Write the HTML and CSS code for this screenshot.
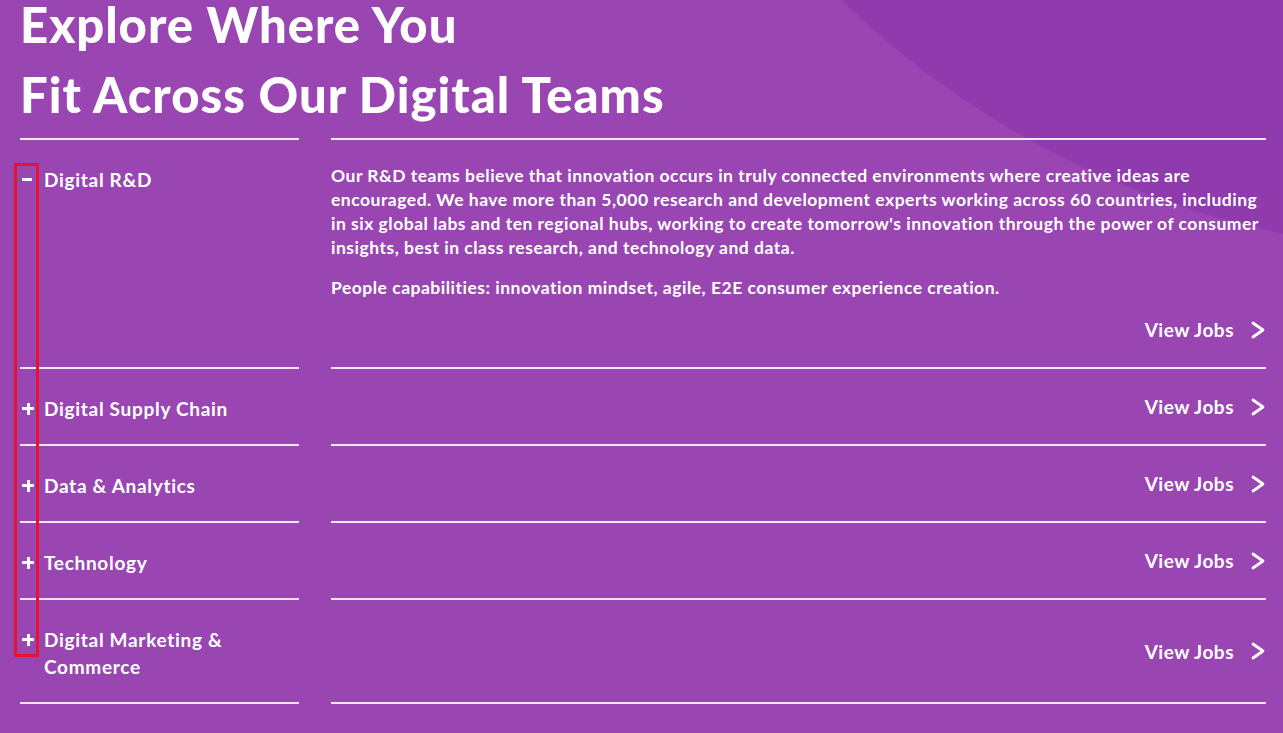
FILE: index.html
```html
<!DOCTYPE html>
<html lang="en">
<head>
<meta charset="utf-8">
<title>Explore Where You Fit Across Our Digital Teams</title>
<link rel="stylesheet" href="styles.css">
</head>
<body>
<section class="teams">
  <h1 class="teams-title">Explore Where You<br>Fit Across Our Digital Teams</h1>
  <div class="accordion">
    <div class="row row-first">
      <div class="cell cell-name">
        <span class="toggle toggle-minus"></span>
        <span class="name">Digital R&amp;D</span>
      </div>
      <div class="cell cell-body">
        <p class="desc">Our R&amp;D teams believe that innovation occurs in truly connected environments where creative ideas are encouraged. We have more than 5,000 research and development experts working across 60 countries, including in six global labs and ten regional hubs, working to create tomorrow's innovation through the power of consumer insights, best in class research, and technology and data.</p>
        <p class="desc">People capabilities: innovation mindset, agile, E2E consumer experience creation.</p>
        <a class="jobs" href="#">View Jobs <svg class="chev" viewBox="0 0 16 18" width="16" height="18"><path d="M3 2 L13 9 L3 16" fill="none" stroke="#fff" stroke-width="2.8" stroke-linecap="round" stroke-linejoin="round"/></svg></a>
      </div>
    </div>
    <div class="row">
      <div class="cell cell-name">
        <span class="toggle"></span>
        <span class="name">Digital Supply Chain</span>
      </div>
      <div class="cell cell-body cell-closed">
        <a class="jobs" href="#">View Jobs <svg class="chev" viewBox="0 0 16 18" width="16" height="18"><path d="M3 2 L13 9 L3 16" fill="none" stroke="#fff" stroke-width="2.8" stroke-linecap="round" stroke-linejoin="round"/></svg></a>
      </div>
    </div>
    <div class="row">
      <div class="cell cell-name">
        <span class="toggle"></span>
        <span class="name">Data &amp; Analytics</span>
      </div>
      <div class="cell cell-body cell-closed">
        <a class="jobs" href="#">View Jobs <svg class="chev" viewBox="0 0 16 18" width="16" height="18"><path d="M3 2 L13 9 L3 16" fill="none" stroke="#fff" stroke-width="2.8" stroke-linecap="round" stroke-linejoin="round"/></svg></a>
      </div>
    </div>
    <div class="row">
      <div class="cell cell-name">
        <span class="toggle"></span>
        <span class="name">Technology</span>
      </div>
      <div class="cell cell-body cell-closed">
        <a class="jobs" href="#">View Jobs <svg class="chev" viewBox="0 0 16 18" width="16" height="18"><path d="M3 2 L13 9 L3 16" fill="none" stroke="#fff" stroke-width="2.8" stroke-linecap="round" stroke-linejoin="round"/></svg></a>
      </div>
    </div>
    <div class="row">
      <div class="cell cell-name">
        <span class="toggle"></span>
        <span class="name">Digital Marketing &amp;<br>Commerce</span>
      </div>
      <div class="cell cell-body cell-closed">
        <a class="jobs" href="#">View Jobs <svg class="chev" viewBox="0 0 16 18" width="16" height="18"><path d="M3 2 L13 9 L3 16" fill="none" stroke="#fff" stroke-width="2.8" stroke-linecap="round" stroke-linejoin="round"/></svg></a>
      </div>
    </div>
  </div>
  <div class="highlight"></div>
</section>
</body>
</html>
```

FILE: styles.css
```css
html, body {
  margin: 0;
  padding: 0;
}
body {
  width: 1283px;
  height: 733px;
  overflow: hidden;
  background-color: #9a46b2;
  background-image: radial-gradient(circle 894px at 1463px -641px, #8f3aad 99.8%, #9a46b2 100%);
  background-repeat: no-repeat;
  font-family: "Lato", "Open Sans", sans-serif;
  color: #fff;
}
.teams {
  display: flow-root;
  position: relative;
  padding: 0 17px 0 20px;
}
.teams-title {
  margin: -11px 0 9px;
  font-size: 49px;
  line-height: 70px;
  font-weight: 900;
  letter-spacing: 1px;
}
.accordion {
  display: flex;
  flex-direction: column;
}
.row {
  display: grid;
  grid-template-columns: 279px 935px;
  column-gap: 32px;
}
.cell {
  border-bottom: 2px solid #f6e9f8;
  padding: 24px 0;
}
.row-first .cell {
  border-top: 2px solid #f6e9f8;
}
.cell-name {
  display: flex;
  align-items: flex-start;
  gap: 10px;
  padding: 26px 0 22px;
}
.name {
  font-size: 19px;
  font-weight: 700;
  line-height: 27px;
  letter-spacing: 0.7px;
}
.toggle {
  position: relative;
  width: 12px;
  height: 27px;
  flex: none;
  margin-left: 2px;
}
.toggle::before,
.toggle::after {
  content: "";
  position: absolute;
  background: #fff;
}
.toggle::before {
  left: 0;
  top: 12px;
  width: 12px;
  height: 3px;
}
.toggle::after {
  left: 4.5px;
  top: 7.5px;
  width: 3px;
  height: 12px;
}
.toggle-minus::after {
  display: none;
}
.toggle-minus::before {
  width: 10px;
}
.cell-body {
  display: flex;
  flex-direction: column;
}
.cell-closed {
  justify-content: center;
}
.desc {
  margin: 0 0 16px;
  font-size: 17.5px;
  font-weight: 700;
  line-height: 24px;
  letter-spacing: 0.5px;
}
.jobs {
  align-self: flex-end;
  display: flex;
  align-items: center;
  gap: 16px;
  color: #fff;
  text-decoration: none;
  font-size: 19px;
  font-weight: 700;
  line-height: 27px;
  letter-spacing: 0.5px;
}
.chev {
  display: block;
}
.highlight {
  position: absolute;
  left: 14px;
  top: 163px;
  width: 19px;
  height: 488px;
  border: 3px solid #e8122d;
}
```
